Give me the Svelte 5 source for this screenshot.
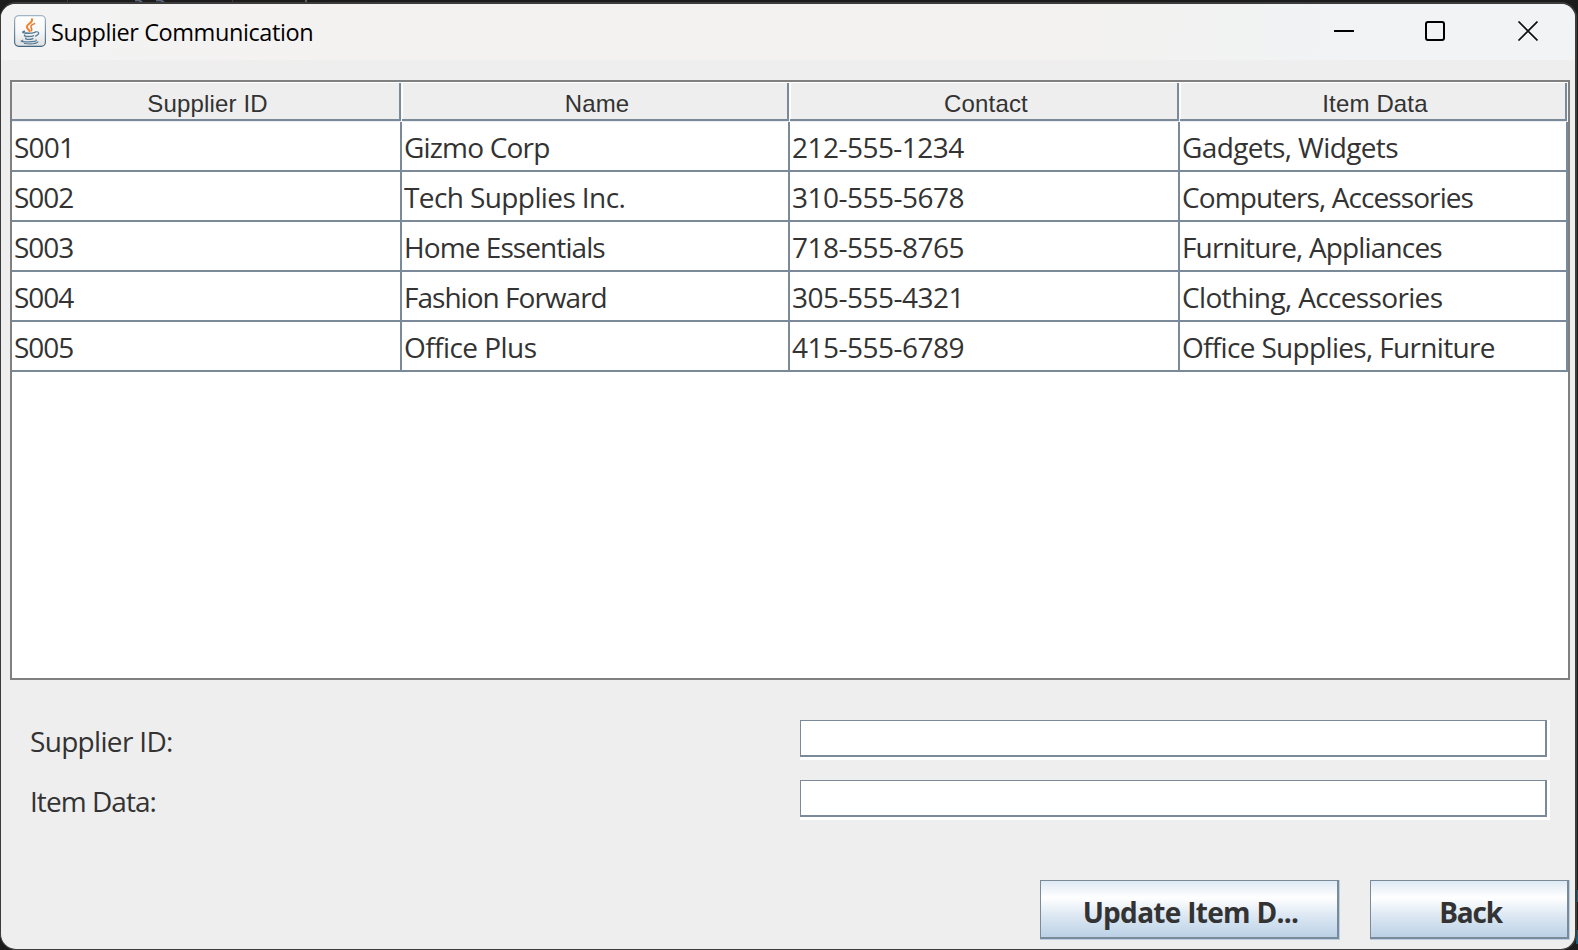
<script>
  const columns = ['Supplier ID', 'Name', 'Contact', 'Item Data'];
  // Each cell holds its text and its tracking in pixels.
  const rows = [
    [['S001', -0.8], ['Gizmo Corp', -0.82], ['212-555-1234', -0.53], ['Gadgets, Widgets', -0.64]],
    [['S002', -1], ['Tech Supplies Inc.', -0.6], ['310-555-5678', -0.5], ['Computers, Accessories', -0.91]],
    [['S003', -1], ['Home Essentials', -0.92], ['718-555-8765', -0.5], ['Furniture, Appliances', -0.84]],
    [['S004', -1], ['Fashion Forward', -0.98], ['305-555-4321', -0.5], ['Clothing, Accessories', -0.65]],
    [['S005', -1], ['Office Plus', -0.55], ['415-555-6789', -0.5], ['Office Supplies, Furniture', -0.67]]
  ];
</script>

<div class="desktop">
  <svg class="backdrop" width="1578" height="950" viewBox="0 0 1578 950" aria-hidden="true">
    <path d="M135 0.5q6-1 8 3.500M156 0.5q7-1 9 3.500" fill="none" stroke="#596377" stroke-width="2" />
    <path d="M67.500 0v3M232.500 0v3" stroke="#3a3a3a" />
    <path d="M306 0v3" stroke="#777" stroke-width="1.500" />
    <path d="M1577 890v12M1577 930v14" stroke="#14627f" stroke-width="2" />
  </svg>
  <main class="window">
    <header class="titlebar">
      <svg class="java" width="32" height="32" viewBox="0 0 32 32" aria-hidden="true">
        <defs>
          <linearGradient id="tile" x2="0" y2="1"><stop stop-color="#fff" /><stop offset=".5" stop-color="#f8f8f8" /><stop offset="1" stop-color="#dedfe0" /></linearGradient>
          <linearGradient id="edge" x2="0" y2="1"><stop stop-color="#a3b5c5" /><stop offset="1" stop-color="#426581" /></linearGradient>
        </defs>
        <rect x=".6" y=".6" width="30.8" height="30.8" rx="4.2" fill="url(#tile)" stroke="url(#edge)" stroke-width="1.2" />
        <g fill="none" stroke-linecap="round">
          <path d="M18 4.300c1.200 3.400-5.600 4.700-5.100 7.900.2 1.500 1.900 2.500 2.700 4" stroke="#f58025" stroke-width="2" />
          <path d="M20.600 8.600c-3 1.100-4.200 2.300-3.500 3.700.5 1.200 1.200 2.100.1 3.500" stroke="#e87432" stroke-width="1.500" />
          <path d="M10.500 16.300c-2.200.5-2.400 1.200-.7 1.500 3 .6 8.500.4 11.300-.5M10.700 20c-.8 1.100.8 1.500 3.200 1.500 2.200 0 4.400-.2 5.500-.7M11.800 23c-.6 1 1 1.400 3.100 1.400 1.700 0 3-.3 4-.8" stroke="#587d99" stroke-width="1.400" />
          <path d="M21.500 16.900c4.200-1 4.400 2.800-.1 4.200M8.800 25.200c-3 .9-1.900 1.700 5.200 1.700 5.900 0 9.200-.6 8-1.900M10.500 28.500c5.400.5 12 .1 13.400-1.700" stroke="#587d99" stroke-width="1.200" />
        </g>
      </svg>
      <span class="caption">Supplier Communication</span>
      <svg class="controls" width="204" height="20" viewBox="0 0 204 20" aria-hidden="true">
        <path d="M0 10h20" stroke="#000" stroke-width="2" />
        <rect x="92" y="1" width="18" height="18" rx="2" fill="none" stroke="#000" stroke-width="2" />
        <path d="M184.500.5l19 19M203.500.5l-19 19" stroke="#111" stroke-width="1.700" />
      </svg>
    </header>

    <section class="scrollpane">
      <div class="grid head">
        {#each columns as column}
          <div class="th">{column}</div>
        {/each}
      </div>
      {#each rows as row}
        <div class="grid row">
          {#each row as [text, tracking]}
            <div class="td" style="letter-spacing: {tracking}px">{text}</div>
          {/each}
        </div>
      {/each}
    </section>

    <section class="form">
      <label class="supplier" for="supplier">Supplier ID:</label>
      <div class="field"><input id="supplier" type="text" /></div>
      <label class="item" for="item">Item Data:</label>
      <div class="field"><input id="item" type="text" /></div>
    </section>

    <footer class="actions">
      <button class="update"><span>Update Item D...</span></button>
      <button class="back"><span>Back</span></button>
    </footer>
  </main>
</div>

<style>
  :global(body) { margin: 0; overflow: hidden; }
  * { box-sizing: border-box; }
  .desktop {
    position: relative;
    width: 1578px;
    height: 950px;
    padding-top: 2px;
    background: #1c1c1c;
    overflow: hidden;
    font-family: "Open Sans", "Noto Sans", sans-serif;
    color: #333;
  }
  .backdrop { position: absolute; left: 0; top: 0; }
  .window {
    position: relative;
    display: flex;
    flex-direction: column;
    width: 1577px;
    height: 948px;
    border: solid #3c3c3c;
    border-width: 2px 2px 1px 1px;
    border-radius: 16px;
    background: #eee;
    overflow: hidden;
  }
  .titlebar {
    display: flex;
    align-items: center;
    flex: none;
    height: 56px;
    padding: 0 37px 2px 13px;
    background: linear-gradient(100deg, #f3f3f3 0, #f4f2f1 25%, #f3f2f0 65%, #f1f3f5 90%, #f2f3f5 100%);
  }
  .java { flex: none; }
  .caption {
    margin-left: 5px;
    padding-top: 2px;
    font-size: 23.5px;
    line-height: 32px;
    color: #000;
    letter-spacing: -0.41px;
    white-space: nowrap;
  }
  .controls { margin-left: auto; flex: none; }
  .scrollpane {
    flex: none;
    width: 1560px;
    height: 600px;
    margin: 20px 0 0 9px;
    border: 2px solid #808080;
    background: #fff;
  }
  .grid { display: grid; grid-template-columns: 390px 388px 390px 388px; }
  .th {
    height: 40px;
    padding-left: 3px;
    border-right: 1px solid #f8f8f8;
    border-bottom: 1px solid #e9edf2;
    border-top: 1px solid #fff;
    box-shadow: inset -2px -2px #7a8a99, inset 1px 0 #fff;
    background: #eee;
    font: 24px/42px "Liberation Sans", Arial, sans-serif;
    letter-spacing: 0.15px;
    text-align: center;
  }
  .th:first-child { padding-left: 2px; box-shadow: inset -2px -2px #7a8a99; }
  .row { height: 50px; }
  .td {
    height: 50px;
    padding-left: 2px;
    border: solid #7a8a99;
    border-width: 0 2px 2px 0;
    font-size: 28px;
    line-height: 50px;
    white-space: nowrap;
  }
  .form {
    display: grid;
    grid-template-columns: 770px 750px;
    grid-template-rows: 40px 40px;
    row-gap: 20px;
    margin: 40px 0 0 29px;
  }
  label {
    font-size: 28px;
    line-height: 42px;
  }
  .supplier { letter-spacing: -0.68px; }
  .item { letter-spacing: -0.95px; }
  .field {
    height: 40px;
    padding: 0 3px 3px 0;
    background: #fff;
  }
  input {
    display: block;
    width: 747px;
    height: 37px;
    padding: 0 4px;
    border: solid #7a8a99;
    border-width: 1px 2px 2px 1px;
    border-radius: 0;
    outline: none;
    background: #fff;
    font: inherit;
  }
  .actions {
    display: flex;
    justify-content: flex-end;
    gap: 30px;
    margin-top: 60px;
    padding-right: 5px;
  }
  button {
    height: 60px;
    padding: 0;
    border: solid #b8cfe5;
    border-width: 0 1px 1px 0;
    border-radius: 0;
    background: linear-gradient(#dde8f3, #fff 30%, #dde8f3 60%, #b8cfe5) padding-box;
    box-shadow: inset 1px 1px #7a8a99, inset -2px -2px #7a8a99;
    color: #333;
    font: bold 28px/64px "Open Sans", "Noto Sans", sans-serif;
    white-space: nowrap;
  }
  button span { display: block; height: 59px; padding-left: 2px; }
  .update { width: 300px; letter-spacing: -0.7px; }
  .back { width: 200px; letter-spacing: -1.2px; }
</style>
